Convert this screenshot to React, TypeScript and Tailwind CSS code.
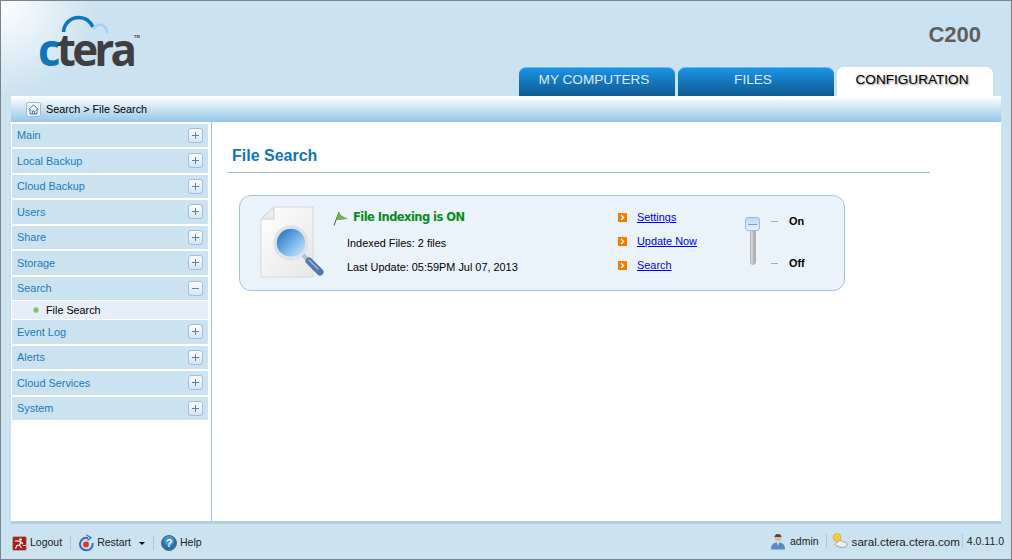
import { useState } from "react";

const sans = "font-['Liberation_Sans',Arial,sans-serif]";

const menu = ["Main", "Local Backup", "Cloud Backup", "Users", "Share", "Storage", "Search", "Event Log", "Alerts", "Cloud Services", "System"];

const Logo = () => (
  <div className="relative w-[110px] h-[52px] ml-[37px] mt-[14px]">
    <svg className="absolute left-0 top-0" width="110" height="34" viewBox="0 0 110 34">
      <path d="M25.5 17 C26 8 33 2.5 41 2.5 C47 2.5 52 6 55 12" fill="none" stroke="#0f75bc" strokeWidth="3.6" />
      <path d="M55.5 14 C57 9.5 62 9 65 10.5 C68 12 69 15 69 18" fill="none" stroke="#9fd3f2" strokeWidth="2.4" />
    </svg>
    <div className="absolute left-0 top-[11px] text-[44px] leading-[46px] font-bold tracking-[-3.8px] text-[#3f3f42] font-['Open_Sans',sans-serif]">
      <span className="text-[#0f75bc]">c</span>
      <span>tera</span>
    </div>
    <span className="absolute left-[96px] top-[19px] text-[4px] leading-[6px] font-bold text-[#3f3f42] font-['Liberation_Sans',sans-serif]">TM</span>
  </div>
);

const Tab = ({ label, active }: { label: string; active?: boolean }) => (
  <div
    className={
      active
        ? "w-[156px] h-[29px] pr-[6px] rounded-t-[7px] bg-white text-black text-[13.6px] text-center leading-[25px] [text-shadow:1px_1px_2px_#888]"
        : "w-[156px] h-[29px] pr-[6px] rounded-t-[7px] bg-gradient-to-b from-[#1a94e8] to-[#0e5a90] border-t border-[#6db7ea] text-[#dfeaf3] text-[13.6px] text-center leading-[24px]"
    }
  >
    {label}
  </div>
);

const HomeIcon = () => (
  <svg width="15" height="15" viewBox="0 0 15 15">
    <rect x="0.5" y="0.5" width="14" height="14" rx="2" fill="#f4f8fd" stroke="#9db7da" />
    <path d="M2.5 7.5 L7.5 3 L12.5 7.5 M4 7 V12 H11 V7 M6.3 12 V9 H8.7 V12" fill="none" stroke="#3f6fa6" strokeWidth="1" />
  </svg>
);

const ToggleBox = ({ open }: { open: boolean }) => (
  <div className="w-[15px] h-[15px] rounded-[3px] border border-[#a3bce8] bg-gradient-to-b from-white to-[#d5e4f6] flex items-center justify-center">
    <svg width="9" height="9" viewBox="0 0 9 9">
      <path d={open ? "M1 4.5 H8" : "M1 4.5 H8 M4.5 1 V8"} stroke="#5f7fa8" strokeWidth="1" fill="none" />
    </svg>
  </div>
);

const Sidebar = () => {
  const [opened] = useState("Search");
  return (
    <div className="w-[201px] shrink-0 border-r border-[#a0bce0] pt-[1.5px] pl-px">
      {menu.map((m) => (
        <div key={m}>
          <div className="w-[196px] h-[23.5px] mb-[2px] bg-[#cbe2f0] flex items-center justify-between px-[5px] text-[10.9px] text-[#1a7cc0]">
            <span>{m}</span>
            <ToggleBox open={m === opened} />
          </div>
          {m === opened && (
            <div className="w-[196px] h-[18px] -mt-[1px] mb-[1px] bg-[#e6eff9] flex items-center pl-[21px] text-[10.8px] text-black">
              <span className="w-[6px] h-[6px] rounded-full bg-[#7dbb6a] border border-[#a8cfa0] mr-[7px]" />
              File Search
            </div>
          )}
        </div>
      ))}
    </div>
  );
};

const DocSearchIcon = () => (
  <svg width="70" height="74" viewBox="0 0 70 74">
    <defs>
      <linearGradient id="lens" x1="0" y1="0" x2="1" y2="1">
        <stop offset="0" stopColor="#1b5fb5" />
        <stop offset="0.5" stopColor="#6fb0e6" />
        <stop offset="1" stopColor="#e3f4fd" />
      </linearGradient>
      <linearGradient id="page" x1="0" y1="0" x2="1" y2="1">
        <stop offset="0" stopColor="#ffffff" />
        <stop offset="1" stopColor="#e6e6e6" />
      </linearGradient>
    </defs>
    <path d="M14 1 H53 V71 H1 V13 Z" fill="url(#page)" stroke="#d2d6da" />
    <path d="M14 1 V13 H1 Z" fill="#e9edf0" stroke="#c9ced3" />
    <circle cx="31" cy="37" r="16" fill="url(#lens)" stroke="#dfe3e8" strokeWidth="3.5" />
    <path d="M42 49 C34 53 24 52 20 47" fill="none" stroke="#cfeafb" strokeWidth="2" />
    <path d="M43 49 L47 53" stroke="#b9bfc6" strokeWidth="4" />
    <path d="M49 55 L60 66" stroke="#4d77ad" strokeWidth="7" strokeLinecap="round" />
    <path d="M49 54 L58 63" stroke="#9db8d8" strokeWidth="1.5" strokeLinecap="round" />
  </svg>
);

const Flag = () => (
  <svg width="16" height="15" viewBox="0 0 16 15">
    <path d="M1 14.5 L6 1" stroke="#4b5a4b" strokeWidth="1" />
    <path d="M6 1 C7 4 10 6 15.5 7.5 C11 8.5 7 9 3.5 9 Z" fill="#6fb44e" />
  </svg>
);

const Bullet = () => (
  <div className="w-[9px] h-[9px] bg-[#f07d00] flex items-center justify-center">
    <svg width="5" height="7" viewBox="0 0 5 7">
      <path d="M1 1 L3.5 3.5 L1 6" stroke="#fff" strokeWidth="1.4" fill="none" />
    </svg>
  </div>
);

const Slider = () => (
  <div className="relative w-[15px] h-[50px]">
    <div className="mx-auto mt-[2px] w-[6px] h-[48px] rounded-[3px] bg-gradient-to-r from-[#dcdcdc] to-[#a8a8a8] border border-[#b5b5b5]" />
    <div className="absolute left-0 top-0 w-[15px] h-[14px] rounded-[3px] border border-[#9db7e0] bg-gradient-to-b from-[#bcd6f8] to-[#e8f1fc] flex items-center justify-center">
      <div className="w-[9px] h-px bg-[#7f9dc4]" />
    </div>
  </div>
);

const Card = () => (
  <div className="w-[606px] h-[96px] ml-[12px] mt-[22px] rounded-[12px] border border-[#a3c1e8] bg-[#eaf3fa] flex text-[10.9px] text-black">
    <div className="ml-[20px] mt-[10px] w-[73px]">
      <DocSearchIcon />
    </div>
    <div className="w-[285px] pt-[14px]">
      <div className="flex items-center h-[16px] font-bold text-[#0a8a1e] text-[11.5px] font-['DejaVu_Sans',sans-serif] tracking-[-0.55px]">
        <Flag />
        <span className="ml-[4px]">File Indexing is ON</span>
      </div>
      <div className="ml-[14px] mt-[9px]">Indexed Files: 2 files</div>
      <div className="ml-[14px] mt-[8px]">Last Update: 05:59PM Jul 07, 2013</div>
    </div>
    <div className="w-[127px] pt-[15px] flex flex-col gap-[11px]">
      {["Settings", "Update Now", "Search"].map((l) => (
        <div key={l} className="flex items-center h-[13px]">
          <Bullet />
          <a href="#" className="ml-[10px] text-[#0000ee] underline">{l}</a>
        </div>
      ))}
    </div>
    <div className="pt-[19px]">
      <Slider />
    </div>
    <div className="ml-[11px] pt-[17px] font-bold">
      <div className="flex items-center h-[16px]">
        <span className="w-[7px] h-px bg-[#aaa] mr-[11px]" />
        On
      </div>
      <div className="flex items-center h-[16px] mt-[26px]">
        <span className="w-[7px] h-px bg-[#aaa] mr-[11px]" />
        Off
      </div>
    </div>
  </div>
);

const Sep = () => <div className="w-px h-[14px] bg-[#a8c8ea]" />;

const LogoutIcon = () => (
  <svg width="15" height="15" viewBox="0 0 15 15">
    <rect x="0.5" y="0.5" width="14" height="14" rx="1.5" fill="#b01c1c" stroke="#aaa" />
    <circle cx="8.5" cy="3.5" r="1.3" fill="#fff" />
    <path d="M3 5 L6 4.8 L9 6 L7.5 9 L9.5 12 M7.5 9 L5 9.5 L3.5 12.5 M9 6 L11 8 M11 9.5 H14" stroke="#fff" strokeWidth="1.2" fill="none" />
  </svg>
);

const RestartIcon = () => (
  <svg width="16" height="18" viewBox="0 0 16 18">
    <path d="M10 4 A6.3 6.3 0 1 0 14.5 9" fill="none" stroke="#3b6db3" strokeWidth="2" />
    <path d="M8.5 1 L13 3.5 L9.5 6.5" fill="none" stroke="#3b6db3" strokeWidth="1.2" />
    <circle cx="8" cy="10.5" r="3" fill="#e0352b" />
  </svg>
);

const HelpIcon = () => (
  <svg width="16" height="16" viewBox="0 0 16 16">
    <circle cx="8" cy="8" r="7.5" fill="#2a6ea8" stroke="#5b6a78" />
    <circle cx="8" cy="6" r="5" fill="#3f97d6" />
    <text x="8" y="12" textAnchor="middle" fontSize="11" fontWeight="bold" fill="#fff" fontFamily="Liberation Sans">?</text>
  </svg>
);

const UserIcon = () => (
  <svg width="16" height="17" viewBox="0 0 16 17">
    <circle cx="8" cy="4.5" r="3.5" fill="#e8b98f" />
    <path d="M4.5 4 C4.5 0 11.5 0 11.5 4 Z" fill="#444" />
    <path d="M1 16.5 C1 11 4 9.5 8 9.5 C12 9.5 15 11 15 16.5 Z" fill="#5d87c4" />
    <path d="M7 9.5 H9 L8 13 Z" fill="#fff" />
  </svg>
);

const ServerIcon = () => (
  <svg width="17" height="16" viewBox="0 0 17 16">
    <circle cx="5" cy="4.5" r="4" fill="#f7c93e" stroke="#d9a520" strokeWidth="0.6" />
    <path d="M5 13 C2.5 13 3 9.5 5.5 9.5 C6 7 10 7 11 9 C14 8.5 16 11.5 14.5 13.5 C13 15 7 14.5 5 13 Z" fill="#eef0f2" stroke="#9a9fa5" />
  </svg>
);

const Footer = () => (
  <div className="h-[35px] flex items-center justify-between pl-[11px] pr-[7px] text-[10.5px] text-[#222]">
    <div className="flex items-center mt-[3px]">
      <LogoutIcon />
      <span className="ml-[3px]">Logout</span>
      <div className="ml-[8px] mr-[7px]"><Sep /></div>
      <RestartIcon />
      <span className="ml-[3px]">Restart</span>
      <span className="ml-[8px] w-0 h-0 border-x-[3px] border-x-transparent border-t-[3px] border-t-black" />
      <div className="ml-[8px] mr-[7px]"><Sep /></div>
      <HelpIcon />
      <span className="ml-[3px]">Help</span>
    </div>
    <div className="flex items-center">
      <UserIcon />
      <span className="ml-[4px]">admin</span>
      <div className="ml-[7px] mr-[5px]"><Sep /></div>
      <ServerIcon />
      <span className="ml-[3px] text-[11.6px]">saral.ctera.ctera.com</span>
      <div className="ml-[2px] mr-[4px]"><Sep /></div>
      <span>4.0.11.0</span>
    </div>
  </div>
);

export default function App() {
  return (
    <div className={`w-[1012px] h-[560px] flex flex-col border border-[#77838e] bg-[#cbe2f0] bg-[radial-gradient(circle_at_0_0,#ffffff_0,#cbe2f0_95px)] ${sans}`}>
      <div className="h-[95px] flex justify-between shrink-0">
        <Logo />
        <div className="flex flex-col items-end">
          <div className="mt-[21px] mr-[30px] text-[22px] leading-[26px] font-bold text-[#5f5f5f]">C200</div>
          <div className="mt-auto mr-[18px] flex gap-[3px] text-center">
            <Tab label="MY COMPUTERS" />
            <Tab label="FILES" />
            <Tab label="CONFIGURATION" active />
          </div>
        </div>
      </div>
      <div className="ml-[10px] mr-[10px] flex-1 min-h-0 flex flex-col bg-white">
        <div className="h-[26px] shrink-0 rounded-t-[4px] bg-gradient-to-b from-white to-[#94c6e9] flex items-center pl-[15px] text-[10.8px] text-black">
          <HomeIcon />
          <span className="ml-[5px]">Search &gt; File Search</span>
        </div>
        <div className="flex-1 min-h-0 flex">
          <Sidebar />
          <div className="flex-1 pl-[15px]">
            <div className="h-[51px] w-[703px] border-b border-[#a0bce0] pl-[5px] pt-[24px] text-[16px] leading-[20px] font-bold text-[#0f75bc]">
              File Search
            </div>
            <Card />
          </div>
        </div>
        <div className="h-[3px] shrink-0 bg-[#b0cfe3]" />
      </div>
      <Footer />
    </div>
  );
}
